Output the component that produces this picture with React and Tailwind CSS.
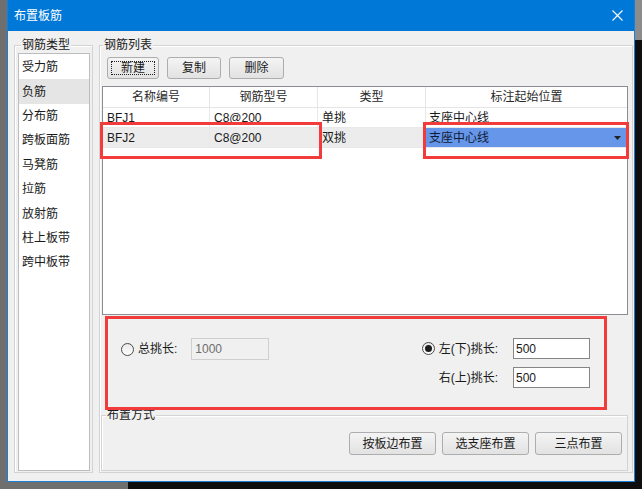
import React from "react";

const rebarTypes = ["受力筋", "负筋", "分布筋", "跨板面筋", "马凳筋", "拉筋", "放射筋", "柱上板带", "跨中板带"];

const rows = [
  { id: "BFJ1", spec: "C8@200", kind: "单挑", pos: "支座中心线" },
  { id: "BFJ2", spec: "C8@200", kind: "双挑", pos: "支座中心线" },
];

const btn =
  "h-[22px] rounded-[3px] border border-[#adadad] bg-[linear-gradient(#f4f4f4,#e2e2e2)] text-[12px] leading-[16px] text-[#1a1a1a] flex items-center justify-center";

const Radio = ({ checked }) => (
  <span className="w-[13px] h-[13px] rounded-full border border-[#4a4a4a] bg-[linear-gradient(#e8e8e8,#ffffff)] flex items-center justify-center shrink-0">
    {checked && <span className="w-[7px] h-[7px] rounded-full bg-[#1c1c1c]" />}
  </span>
);

const App = () => {
  return (
    <div className="w-[642px] h-[489px] overflow-hidden relative font-['Liberation_Sans','Noto_Sans_CJK_SC',sans-serif] text-[12px] leading-[16px] text-[#1a1a1a] bg-[linear-gradient(90deg,#6f6f6f_0_128px,transparent_128px),linear-gradient(180deg,#8c8c8c_0_40px,#0e0e0e_40px)]">
      <div className="absolute left-[7px] top-0 w-[628px] h-[482px] border border-t-0 border-[#1a7fd6] bg-[#f0f0f0] flex flex-col">
        {/* title bar */}
        <div className="h-[31px] bg-[#0078d7] flex items-center justify-between pl-[6px] pr-[10px] shrink-0">
          <span className="text-white text-[12px] leading-[16px]">布置板筋</span>
          <svg width="11" height="11" viewBox="0 0 11 11" className="mr-[1px]">
            <path d="M0.5 0.5 L10.5 10.5 M10.5 0.5 L0.5 10.5" stroke="#fff" strokeWidth="1.1" />
          </svg>
        </div>

        {/* body */}
        <div className="flex-1 flex pt-[14px] pb-[8px] pl-[6px]">
          {/* 钢筋类型 */}
          <div className="relative w-[79px] border border-[#d3d3d3] shadow-[inset_1px_1px_0_#fff] pt-[7px] pl-[3px] pr-[2px] pb-[1px] flex">
            <span className="absolute -top-[9px] left-[6px] px-[1px] bg-[#f0f0f0]">钢筋类型</span>
            <div className="flex-1 border border-[#bdbdbd] bg-white pt-[1px]">
              {rebarTypes.map((t, i) => (
                <div
                  key={t}
                  className={`h-[24.4px] flex items-center pl-[3px] ${i === 1 ? "bg-[#e5e5e5]" : ""}`}
                >
                  {t}
                </div>
              ))}
            </div>
          </div>

          {/* 钢筋列表 */}
          <div className="relative ml-[6px] w-[534px] border border-[#d3d3d3] shadow-[inset_1px_1px_0_#fff] flex flex-col">
            <span className="absolute -top-[9px] left-[3px] px-[1px] bg-[#f0f0f0]">钢筋列表</span>

            <div className="mt-[11px] ml-[7px] flex">
              <button className={`${btn} w-[52px] border-[#6f8fb4] relative`}>
                <span className="absolute inset-[3px] border border-dotted border-[#222]" />
                新建
              </button>
              <button className={`${btn} w-[54px] ml-[8px]`}>复制</button>
              <button className={`${btn} w-[55px] ml-[8px]`}>删除</button>
            </div>

            {/* table */}
            <div className="relative mt-[7px] ml-[2px] w-[526px] h-[229px] border border-[#8a8d94] bg-white">
              <div className="grid grid-cols-[107px_108px_108px_1fr] h-[21px] border-b border-[#e5e5e5] text-[#2a2a2a]">
                {["名称编号", "钢筋型号", "类型", "标注起始位置"].map((h, i) => (
                  <div key={h} className={`flex items-center justify-center ${i < 3 ? "border-r border-[#e5e5e5]" : ""}`}>
                    {h}
                  </div>
                ))}
              </div>
              {rows.map((r, ri) => (
                <div
                  key={r.id}
                  className={`grid grid-cols-[107px_108px_108px_1fr] h-[20px] border-b border-[#e8e8e8] ${ri === 1 ? "bg-[#ececec]" : ""}`}
                >
                  <div className="flex items-center pl-[4px] border-r border-[#e8e8e8]">{r.id}</div>
                  <div className="flex items-center pl-[4px] border-r border-[#e8e8e8]">{r.spec}</div>
                  <div className="flex items-center pl-[4px] border-r border-[#e8e8e8]">{r.kind}</div>
                  {ri === 1 ? (
                    <div className="flex items-center justify-between pl-[3px] pr-[6px] bg-[#6596ea] text-[#121a33]">
                      <span>{r.pos}</span>
                      <svg width="7" height="4" viewBox="0 0 7 4">
                        <path d="M0 0 H7 L3.5 4 Z" fill="#222" />
                      </svg>
                    </div>
                  ) : (
                    <div className="flex items-center pl-[3px] bg-white">{r.pos}</div>
                  )}
                </div>
              ))}

              <div className="absolute left-[-3px] top-[35px] w-[222px] h-[37px] border-[3px] border-[#f23c3c]" />
              <div className="absolute left-[320px] top-[35px] w-[206px] h-[37px] border-[3px] border-[#f23c3c]" />
            </div>

            {/* 挑长 */}
            <div className="relative z-10 mt-[1px] ml-[5px] w-[502px] h-[94px] border-[3px] border-[#f23c3c] flex justify-between items-start pt-[19px] pl-[13px] pr-[14px]">
              <div className="flex items-center h-[22px]">
                <Radio />
                <span className="ml-[4px]">总挑长:</span>
                <div className="ml-[14px] w-[78px] h-[22px] border border-[#cfcfcf] bg-[#f0f0f0] flex items-center pl-[3px] text-[#6d6d6d]">
                  1000
                </div>
              </div>
              <div className="grid grid-cols-[auto_77px] gap-x-[15px] gap-y-[8px] items-center">
                <div className="flex items-center">
                  <Radio checked />
                  <span className="ml-[4px]">左(下)挑长:</span>
                </div>
                <div className="h-[21px] border border-[#868686] bg-white flex items-center pl-[2px]">500</div>
                <div className="justify-self-end">右(上)挑长:</div>
                <div className="h-[21px] border border-[#868686] bg-white flex items-center pl-[2px]">500</div>
              </div>
            </div>

            {/* 布置方式 */}
            <div className="relative mt-[5px] ml-[1px] w-[527px] h-[56px] border border-[#d3d3d3] shadow-[inset_1px_1px_0_#fff] flex justify-end pt-[16px] pr-[5px]">
              <span className="absolute -top-[9px] left-[4px] px-[1px] bg-[#f0f0f0]">布置方式</span>
              <button className={`${btn} w-[87px] h-[23px]`}>按板边布置</button>
              <button className={`${btn} w-[87px] h-[23px] ml-[6px]`}>选支座布置</button>
              <button className={`${btn} w-[87px] h-[23px] ml-[6px]`}>三点布置</button>
            </div>
          </div>
        </div>
      </div>
    </div>
  );
};

export default App;
